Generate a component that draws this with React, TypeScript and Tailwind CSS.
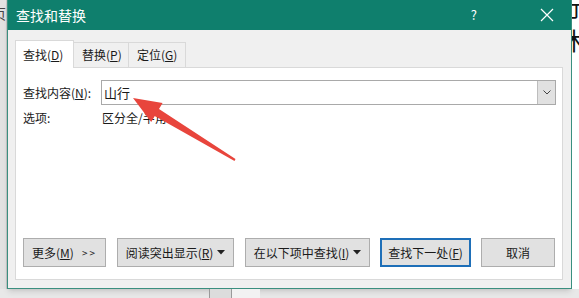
import React from 'react';

const font = { fontFamily: '"Noto Sans CJK SC", "Liberation Sans", sans-serif' };

const Btn: React.FC<{ w: string; primary?: boolean; children: React.ReactNode }> = ({ w, primary, children }) => (
  <div
    className={`${w} h-[29px] flex items-center justify-center text-[12px] text-[#1a1a1a] bg-[#e1e1e1] ${
      primary ? 'border-2 border-[#1e6fb8]' : 'border border-[#adadad]'
    }`}
  >
    {children}
  </div>
);

const Caret = () => (
  <svg width="8" height="5" viewBox="0 0 8 5" className="ml-[4px]">
    <path d="M0 0 L8 0 L4 4.5 Z" fill="#222" />
  </svg>
);

export default function App() {
  return (
    <div className="w-[579px] h-[298px] overflow-hidden bg-[#e8e8e8] relative" style={font}>
      <div className="flex h-[289px]">
        {/* left part of the document behind */}
        <div className="w-[7px] bg-[#e2e2e2] border-r border-[#c8c8c8] overflow-hidden">
          <div className="text-[14px] leading-none mt-[6px] ml-[-8px] text-[#444]">页</div>
        </div>

        {/* dialog */}
        <div className="w-[565px] flex flex-col border-x border-b border-[#3a8f7f] bg-[#f0f0f0] shadow-md">
          <div className="h-[30px] bg-[#0f7f6d] flex items-center text-white">
            <div className="ml-[8px] text-[14px]">查找和替换</div>
            <div className="ml-auto mr-[63px] text-[13px]">?</div>
            <svg width="14" height="14" viewBox="0 0 14 14" className="mr-[17px]">
              <path d="M1 1 L13 13 M13 1 L1 13" stroke="#fff" strokeWidth="1.2" />
            </svg>
          </div>

          <div className="flex-1 pl-[7px] pr-[8px] pt-[10px] pb-[8px] flex flex-col">
            {/* tabs */}
            <div className="flex items-end h-[27px] text-[12px] text-[#1a1a1a]">
              <div className="w-[59px] h-[28px] -mb-px bg-white border border-b-0 border-[#d9d9d9] flex items-center pl-[7px] relative z-10">
                查找(<span className="underline">D</span>)
              </div>
              <div className="w-[55px] h-[25px] border-t border-r border-[#d9d9d9] flex items-center pl-[8px]">
                替换(<span className="underline">P</span>)
              </div>
              <div className="w-[57px] h-[25px] border-t border-r border-[#d9d9d9] flex items-center pl-[8px]">
                定位(<span className="underline">G</span>)
              </div>
            </div>

            {/* panel */}
            <div className="flex-1 bg-white border border-[#d9d9d9] pl-[7px] pr-[6px] pt-[12px] pb-[12px] flex flex-col text-[12px] text-[#1a1a1a]">
              <div className="flex items-center h-[25px]">
                <div className="w-[78px]">
                  查找内容(<span className="underline">N</span>):
                </div>
                <div className="flex-1 h-[25px] border border-[#a9a9a9] flex items-center">
                  <div className="flex-1 pl-[2px] text-[13px]">山行</div>
                  <div className="w-[18px] h-[23px] bg-[#e1e1e1] border-l border-[#bdbdbd] flex items-center justify-center">
                    <svg width="8" height="5" viewBox="0 0 8 5">
                      <path d="M0.5 0.5 L4 4 L7.5 0.5" stroke="#444" strokeWidth="1" fill="none" />
                    </svg>
                  </div>
                </div>
              </div>
              <div className="flex items-center h-[16px] mt-[5px]">
                <div className="w-[79px]">选项:</div>
                <div>区分全/半角</div>
              </div>

              <div className="mt-auto flex">
                <Btn w="w-[83px]">
                  更多(<span className="underline">M</span>)<span className="ml-[8px] text-[10px] tracking-[2px]">&gt;&gt;</span>
                </Btn>
                <div className="ml-[11px]">
                  <Btn w="w-[117px]">
                    阅读突出显示(<span className="underline">R</span>)<Caret />
                  </Btn>
                </div>
                <div className="ml-[11px]">
                  <Btn w="w-[125px]">
                    在以下项中查找(<span className="underline">I</span>)<Caret />
                  </Btn>
                </div>
                <div className="ml-[10px]">
                  <Btn w="w-[91px]" primary>
                    查找下一处(<span className="underline">F</span>)
                  </Btn>
                </div>
                <div className="ml-[10px]">
                  <Btn w="w-[74px]">取消</Btn>
                </div>
              </div>
            </div>
          </div>
        </div>

        {/* right part of the document behind */}
        <div className="w-[7px] bg-white overflow-hidden text-[24px] leading-none text-[#111]">
          <div className="ml-[-14px] mt-[-6px]">行</div>
          <div className="ml-[-10px] mt-[10px]">木</div>
        </div>
      </div>

      <div className="h-[9px] flex">
        <div className="w-[209px]" />
        <div className="w-px bg-[#9a9a9a]" />
        <div className="w-[21px] bg-[#dcdcdc]" />
        <div className="w-px bg-[#9a9a9a]" />
        <div className="w-[28px] bg-[#f2f2f2]" />
      </div>

      {/* red arrow annotation */}
      <svg className="absolute left-0 top-0 pointer-events-none" width="579" height="298">
        <polygon
          points="133,98 162.6,103.1 159,109.1 235.5,159.1 234.5,160.9 154.8,115.9 151.2,121.9"
          fill="#e8453c"
        />
      </svg>
    </div>
  );
}
